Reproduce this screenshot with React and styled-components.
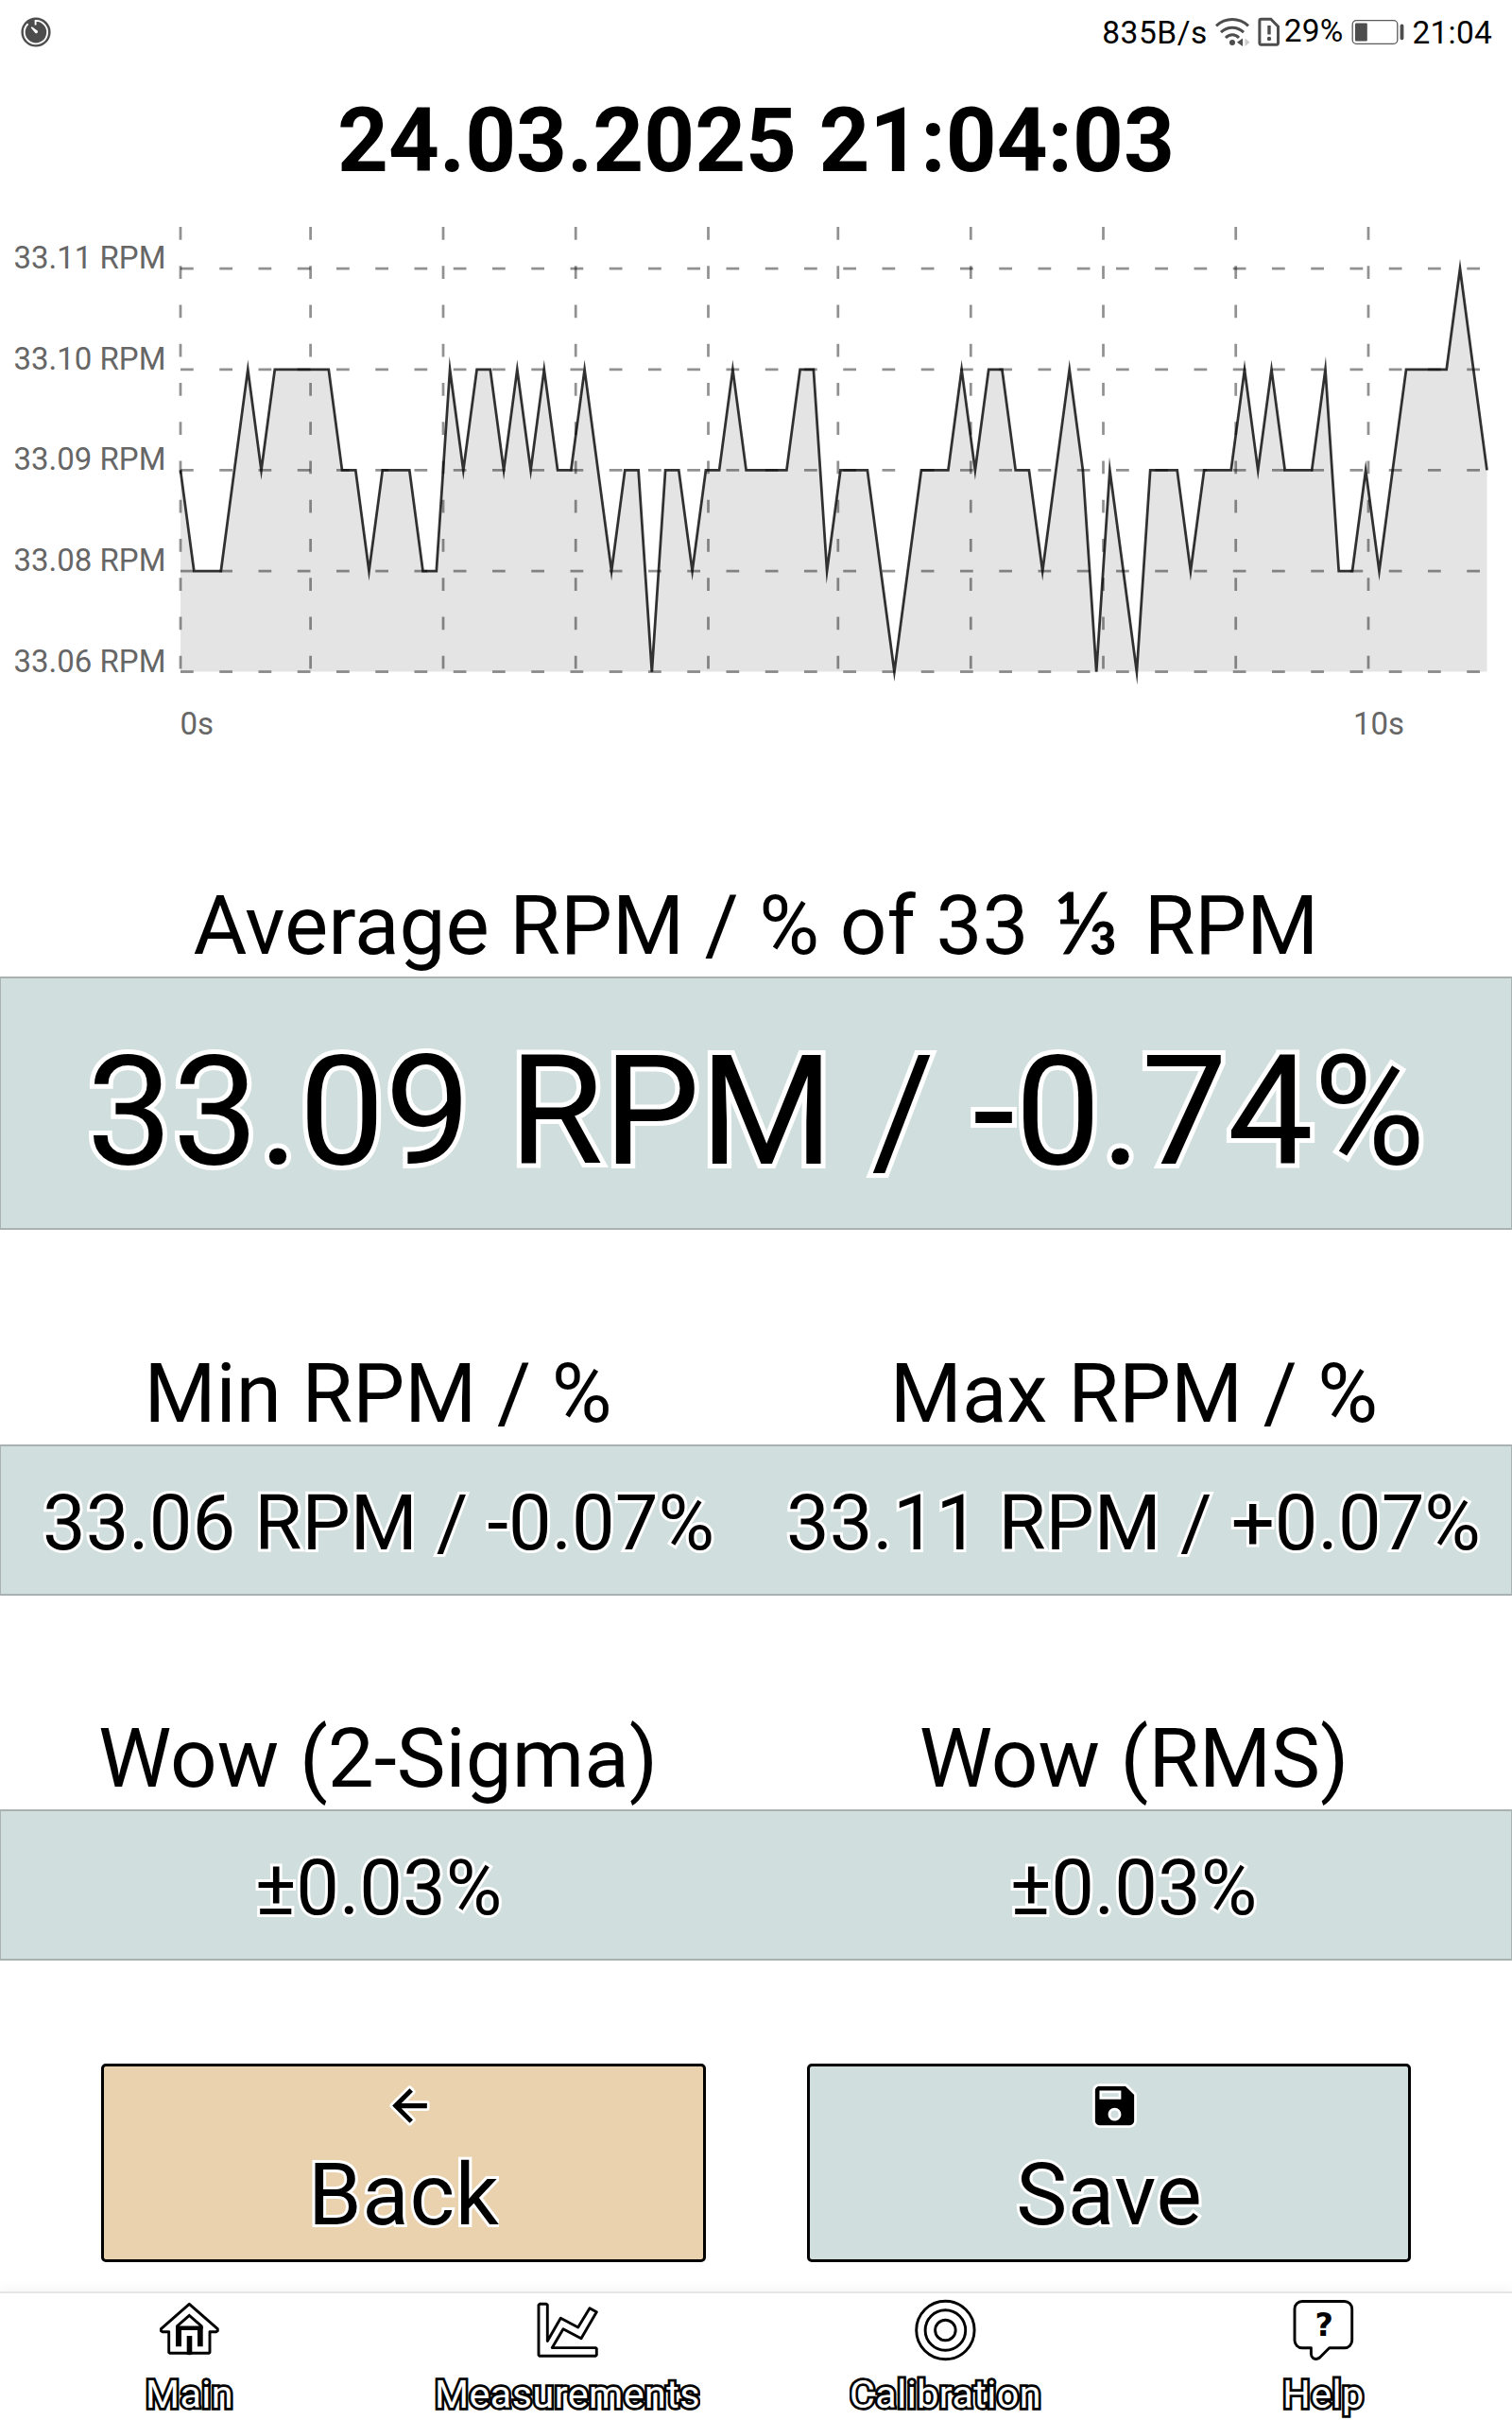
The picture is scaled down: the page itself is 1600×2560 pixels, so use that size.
import React from 'react'
import styled, { createGlobalStyle } from 'styled-components'

// one character per sample, 4 = 33.11 RPM ... 0 = 33.06 RPM
const SAMPLES =
  '21112323333322122211323323232232122022122322223312221012223233221232021022212223232223112123333432'

const LEVELS = ['33.06 RPM', '33.08 RPM', '33.09 RPM', '33.10 RPM', '33.11 RPM']
const SECONDS = [191, 328.6, 469, 609.2, 749.5, 886.8, 1027.3, 1167.5, 1307.7, 1448]

const LEFT = 191
const RIGHT = 1573.5
const BASE = 480.6
const LEVEL_HEIGHT = 106.6

const levelY = (level) => BASE - level * LEVEL_HEIGHT

const Chart = () => {
  const step = (RIGHT - LEFT) / (SAMPLES.length - 1)
  const line = SAMPLES.split('').map((s, i) => `${(LEFT + i * step).toFixed(1)},${levelY(Number(s)).toFixed(1)}`).join(' L')
  return (
    <ChartSvg width="1600" height="570" viewBox="0 0 1600 570">
      <path className="area" d={`M${line} L${RIGHT},${BASE} L${LEFT},${BASE} Z`} />
      {LEVELS.map((label, i) => (
        <g key={label}>
          <line className="grid" x1={LEFT} x2={RIGHT} y1={levelY(i)} y2={levelY(i)} />
          <text x="175.5" y={levelY(i)} textAnchor="end">{label}</text>
        </g>
      ))}
      {SECONDS.map((x) => (
        <line key={x} className="grid" x1={x} x2={x} y1="10" y2={BASE} />
      ))}
      <path className="line" d={`M${line}`} />
      <text x="190.5" y="546.5">0s</text>
      <text x="1432" y="546.5">10s</text>
    </ChartSvg>
  )
}

const TimerIcon = () => (
  <svg width="32" height="32" viewBox="0 0 32 32" fill="none">
    <circle cx="16" cy="16" r="15.6" fill="#4d4d4d" />
    <path d="M7.6 7.2A12.2 12.2 0 1 0 15.6 3.9V8.6" stroke="#fff" strokeWidth="1.9" />
    <path d="M10.7 11.2l1.1-.9 5.8 4.3a1.6 1.6 0 0 1-2.2 2.3z" fill="#fff" />
  </svg>
)

const WifiIcon = () => (
  <svg width="36" height="32" viewBox="0 0 36 32" fill="none" stroke="#4d4d4d" strokeWidth="3">
    <path d="M1 9.3C11 .3 25 .3 35 9.3" />
    <path d="M6 16.2c7-6.6 17-6.6 24 0" />
    <path d="M11 22c4.2-4.2 10-4.2 14 0" />
    <circle cx="18" cy="27" r="3" fill="#4d4d4d" stroke="none" />
    <path d="M29 22.5v8.5l-6-4.3z" fill="#4d4d4d" stroke="none" />
    <path d="M31.5 22.5v8.5l5-4.3z" fill="#ccc" stroke="none" />
  </svg>
)

const SimIcon = () => (
  <svg width="24" height="32" viewBox="0 0 24 32" fill="none" stroke="#4d4d4d" strokeWidth="3">
    <path d="M3.5 2.2h10.3l7.7 7.8v17.6a1.6 1.6 0 0 1-1.6 1.6H3.5a1.6 1.6 0 0 1-1.6-1.6V3.8a1.6 1.6 0 0 1 1.6-1.6z" />
    <path d="M12 9v9.5" strokeWidth="3.4" />
    <circle cx="12" cy="23" r="2.2" fill="#4d4d4d" stroke="none" />
  </svg>
)

const BatteryIcon = () => (
  <svg width="56" height="28" viewBox="0 0 56 28">
    <rect x="1.2" y="1.7" width="47.6" height="24.6" rx="4" fill="none" stroke="#5a5a5a" strokeWidth="1.3" />
    <rect x="4" y="4.6" width="12.8" height="19" rx="1" fill="#4d4d4d" />
    <rect x="51.6" y="5.6" width="3.8" height="16.6" rx="1.9" fill="#4d4d4d" />
  </svg>
)

const HomeIcon = () => (
  <NavSvg viewBox="0 0 66 66">
    <path d="M33.3 5.3L3.4 31.6v2.2l1.6.9h6.7v21.8l.8.8h18l2.8.6 2.8-.6h18.1l.8-.8V34.7h6.7l1.6-.9v-2.2z" />
    <path d="M20.5 30V28.6L33.3 17.5l12.9 11.1V30z" strokeLinejoin="miter" />
    <path className="solid" d="M19 29h28.7v21.3H42V33H25v17.3h-6zM30.7 39h5.6v19.5h-5.6z" />
  </NavSvg>
)

const ChartIcon = () => (
  <NavSvg viewBox="0 0 66 66">
    <path d="M4.2 5.3h7l1.1 1.1V44.5L26.3 20.3 44.7 30 57 9.7l7.3 4L48 41.7 29 31.7 17.3 51.6H63.3l1 1v6.7l-1 1H4.2L3 59.3V6.4z" />
  </NavSvg>
)

const TargetIcon = () => (
  <NavSvg viewBox="0 0 66 66">
    <circle cx="33.4" cy="33" r="30.7" />
    <circle cx="33.4" cy="33" r="21.3" />
    <circle cx="33.4" cy="33" r="10.8" />
  </NavSvg>
)

const HelpIcon = () => (
  <NavSvg viewBox="0 0 66 66">
    <path d="M11 2.5H55.7a8 8 0 0 1 8 8V43.8a8 8 0 0 1-8 8H39.7L29.5 62Q26 64.7 22.5 62.5 20.4 61 20.4 58V51.8H11a8 8 0 0 1-8-8V10.5a8 8 0 0 1 8-8z" />
    <text x="34.3" y="39" textAnchor="middle">?</text>
  </NavSvg>
)

const BackIcon = () => (
  <ButtonSvg viewBox="0 0 24 24">
    <path d="M20 10.9H8.2l5.3-5.3L12 4l-8 8 8 8 1.5-1.5-5.3-5.3H20z" />
  </ButtonSvg>
)

const SaveIcon = () => (
  <ButtonSvg viewBox="0 0 24 24">
    <path d="M17 3H5c-1.11 0-2 .9-2 2v14c0 1.1.89 2 2 2h14c1.1 0 2-.9 2-2V7l-4-4zm-5 16c-1.66 0-3-1.34-3-3s1.34-3 3-3 3 1.34 3 3-1.34 3-3 3zm3-10H5V5h10v4z" />
  </ButtonSvg>
)

const NAV = [
  { label: 'Main', icon: <HomeIcon /> },
  { label: 'Measurements', icon: <ChartIcon /> },
  { label: 'Calibration', icon: <TargetIcon /> },
  { label: 'Help', icon: <HelpIcon /> },
]

const App = () => {
  return (
    <Screen>
      <GlobalStyle />
      <StatusBar>
        <TimerIcon />
        <div className="right">
          <span className="speed">835B/s</span>
          <WifiIcon />
          <SimIcon />
          <span className="percent">29%</span>
          <BatteryIcon />
          <span className="time">21:04</span>
        </div>
      </StatusBar>
      <Title>24.03.2025 21:04:03</Title>
      <Chart />

      <Section $top={128}>
        <Labels><span>Average RPM / % of 33 <Fraction>⅓</Fraction> RPM</span></Labels>
        <Values $large><span>33.09 RPM / -0.74%</span></Values>
      </Section>
      <Section $top={122}>
        <Labels><span>Min RPM / %</span><span>Max RPM / %</span></Labels>
        <Values><span>33.06 RPM / -0.07%</span><span>33.11 RPM / +0.07%</span></Values>
      </Section>
      <Section $top={121}>
        <Labels><span>Wow (2-Sigma)</span><span>Wow (RMS)</span></Labels>
        <Values><span>±0.03%</span><span>±0.03%</span></Values>
      </Section>

      <Actions>
        <Button $color="#e9d2ad"><BackIcon /><span>Back</span></Button>
        <Button $color="#d0dedd"><SaveIcon /><span>Save</span></Button>
      </Actions>

      <NavBar>
        {NAV.map(({ label, icon }) => (
          <NavItem key={label}>{icon}<span>{label}</span></NavItem>
        ))}
      </NavBar>
    </Screen>
  )
}

export default App

const GlobalStyle = createGlobalStyle`
    body{
        margin: 0;
        background-color: #FFFFFF;
        font-family: Roboto, "Liberation Sans", sans-serif;
        color: #000000;
    }
    svg{
        display: block;
        flex-shrink: 0;
    }
`

const Screen = styled.div`
    display: flex;
    flex-direction: column;
    width: 1600px;
    height: 2560px;
    overflow: hidden;
    background-color: #FFFFFF;
`

const StatusBar = styled.div`
    display: flex;
    align-items: center;
    justify-content: space-between;
    height: 67px;
    padding: 0 21px 0 22px;
    font-size: 33.5px;
    line-height: 40px;
    letter-spacing: .2px;
    & .right{
        display: flex;
        align-items: center;
    }
    & .speed{
        margin: 2px 8px 0 0;
        letter-spacing: .5px;
    }
    & .percent{
        margin: -1px 8px 0 4px;
    }
    & .time{
        margin: 2px 0 0 9px;
    }
    & svg + svg{
        margin-left: 9px;
    }
`

const Title = styled.div`
    margin-top: 27px;
    height: 136px;
    font-size: 94px;
    font-weight: 700;
    line-height: 110px;
    text-align: center;
`

const ChartSvg = styled.svg`
    & .area{
        fill: rgba(0, 0, 0, .105);
    }
    & .grid{
        stroke: rgba(0, 0, 0, .43);
        stroke-width: 2.75;
        stroke-dasharray: 13.75 27.5;
    }
    & .line{
        fill: none;
        stroke: rgba(0, 0, 0, .8);
        stroke-width: 2.75;
        stroke-miterlimit: 12;
    }
    & text{
        fill: #666666;
        font-size: 33px;
    }
`

const Section = styled.div`
    margin-top: ${({ $top }) => $top}px;
`

const Labels = styled.div`
    display: flex;
    height: 105px;
    font-size: 87.2px;
    line-height: 102px;
    & > span{
        flex: 1;
        text-align: center;
        white-space: nowrap;
    }
`

// Roboto has no vulgar thirds
const Fraction = styled.span`
    padding: 0 6px;
    font-family: Lato, sans-serif;
    font-size: 92px;
    line-height: 0;
    -webkit-text-stroke: 1px #000000;
`

const Values = styled.div`
    box-sizing: border-box;
    display: flex;
    align-items: center;
    height: ${({ $large }) => ($large ? 268 : 160)}px;
    padding-top: ${({ $large }) => ($large ? 18 : 6)}px;
    border: solid #A9B2B1;
    border-width: 2px 1px;
    background-color: #D0DEDD;
    font-size: ${({ $large }) => ($large ? 162 : 81.3)}px;
    & span{
        flex: 1;
        text-align: center;
        white-space: nowrap;
        -webkit-text-stroke: ${({ $large }) => ($large ? 10 : 6)}px #FFFFFF;
        paint-order: stroke fill;
        stroke-linejoin: round;
    }
`

const Actions = styled.div`
    display: flex;
    gap: 107px;
    margin: 109px 107px 0;
`

const Button = styled.div`
    box-sizing: border-box;
    flex: 1;
    display: flex;
    flex-direction: column;
    align-items: center;
    height: 210px;
    padding-top: 14px;
    border: 3px solid #000000;
    border-radius: 5px;
    background-color: ${({ $color }) => $color};
    & span{
        margin: 14px 0 0 1px;
        overflow: hidden;
        font-size: 91px;
        line-height: 107px;
        letter-spacing: .6px;
        -webkit-text-stroke: 6px #FFFFFF;
        paint-order: stroke fill;
    }
`

const ButtonSvg = styled.svg`
    width: 55px;
    height: 55px;
    margin-left: 13px;
    overflow: visible;
    fill: #000000;
    stroke: #FFFFFF;
    stroke-width: 2.4;
    stroke-linejoin: round;
    paint-order: stroke fill;
`

const NavBar = styled.div`
    display: flex;
    height: 134px;
    margin-top: auto;
    border-top: 2px solid #E6E6E6;
    background-color: #FFFFFF;
    box-shadow: 0 -2px 12px rgba(0, 0, 0, .05);
`

const NavItem = styled.div`
    flex: 1;
    display: flex;
    flex-direction: column;
    align-items: center;
    padding-top: 6px;
    & span{
        margin: 11px 0 0 1px;
        overflow: hidden;
        color: #FFFFFF;
        font-size: 41.25px;
        line-height: 49px;
        letter-spacing: .45px;
        -webkit-text-stroke: 5.5px #000000;
        paint-order: stroke fill;
    }
`

const NavSvg = styled.svg`
    width: 66px;
    height: 66px;
    fill: #FFFFFF;
    stroke: #000000;
    stroke-width: 2.9;
    stroke-linejoin: round;
    & .solid{
        fill: #000000;
        stroke: none;
    }
    & text{
        fill: #000000;
        stroke: none;
        font-family: "DejaVu Sans", sans-serif;
        font-size: 33.5px;
        font-weight: 700;
    }
`
